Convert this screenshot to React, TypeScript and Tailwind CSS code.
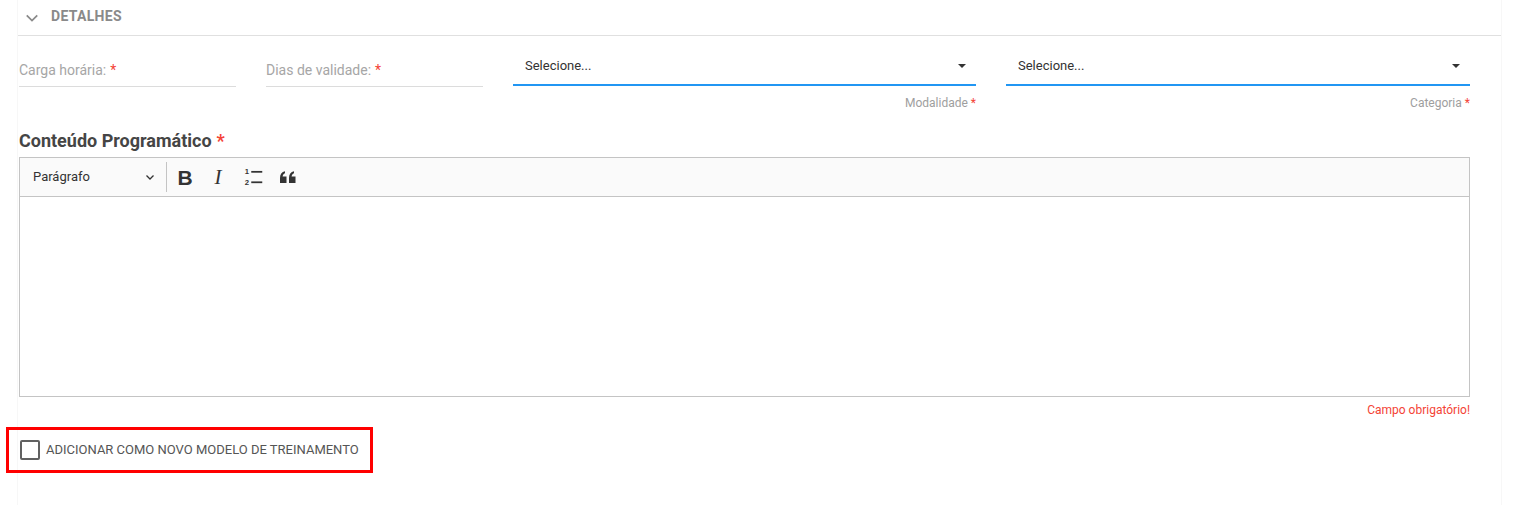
import React from 'react'

function Req() {
  return <span className="text-[#f44336] ml-1">*</span>
}

function TextField({ label }: { label: string }) {
  return (
    <div className="pt-[23px]">
      <div className="h-[28px] border-b border-[#dcdcdc] text-[14px] text-[#a6a6a6] pt-[1px]">
        {label}
        <Req />
      </div>
    </div>
  )
}

function SelectField({ label }: { label: string }) {
  return (
    <div className="pt-[18px]">
      <div className="h-[32px] border-b-2 border-[#2196f3] flex items-center justify-between pl-3 pr-[10px] pb-[6px]">
        <span className="text-[13px] text-[#333]">Selecione...</span>
        <span className="w-0 h-0 border-l-[4px] border-r-[4px] border-t-[4px] border-l-transparent border-r-transparent border-t-[#333]" />
      </div>
      <div className="text-right text-[12px] text-[#9e9e9e] mt-[8px]">
        {label}
        <span className="text-[#f44336] ml-[3px]">*</span>
      </div>
    </div>
  )
}

export default function App() {
  return (
    <div className="w-[1518px] h-[505px] bg-white font-['Roboto',sans-serif]">
      <div className="ml-[17px] w-[1485px] h-[505px] border-x border-[#f7f7f7] pr-[30px]">
        <div className="h-[36px] mr-[-30px] border-b border-[#e0e0e0] flex items-center gap-[12px] pl-[7px]">
          <svg width="14" height="14" viewBox="0 0 24 24" fill="none" stroke="#8a8a8a" strokeWidth="3">
            <path d="M3 7.5l9 9 9-9" />
          </svg>
          <span className="text-[14px] font-bold text-[#8a8a8a] tracking-[0.3px] mt-[-2px]">DETALHES</span>
        </div>

        <div className="grid grid-cols-[217px_217px_463px_464px] gap-x-[30px] pl-[1px]">
          <TextField label="Carga horária:" />
          <TextField label="Dias de validade:" />
          <SelectField label="Modalidade" />
          <SelectField label="Categoria" />
        </div>

        <div className="pl-[1px] w-[1452px]">
          <div className="mt-[16px] text-[18px] leading-[26px] font-bold text-[#454545]">
            Conteúdo Programático
            <span className="text-[#f44336] ml-[5px]">*</span>
          </div>
          <div className="mt-[3px] border border-[#c4c4c4]">
            <div className="h-[39px] bg-[#fafafa] border-b border-[#c4c4c4] flex items-center">
              <div className="w-[146px] flex items-center justify-between pl-[13px] pr-[11px]">
                <span className="text-[13px] text-[#333]">Parágrafo</span>
                <svg width="10" height="10" viewBox="0 0 10 10" fill="none" stroke="#333" strokeWidth="1.3">
                  <path d="M1.5 3.5l3.5 3.5 3.5-3.5" />
                </svg>
              </div>
              <div className="w-px h-[30px] bg-[#c4c4c4]" />
              <div className="flex items-center gap-[14px] pl-[10px]">
                <span className="text-[21px] font-bold text-[#333] leading-none font-['Liberation_Sans',sans-serif] w-[16px] text-center">B</span>
                <span className="text-[21px] italic text-[#333] leading-none font-['Liberation_Serif',serif] w-[22px] text-center">I</span>
                <svg width="22" height="22" viewBox="0 0 20 20" fill="#333">
                  <text x="1.5" y="7.5" fontSize="7" fontFamily="Liberation Sans" fontWeight="bold">1</text>
                  <text x="1.5" y="17" fontSize="7" fontFamily="Liberation Sans" fontWeight="bold">2</text>
                  <rect x="7.5" y="4.5" width="10" height="1.6" />
                  <rect x="7.5" y="14" width="10" height="1.6" />
                </svg>
                <svg width="18" height="18" viewBox="0 0 18 18" fill="#333">
                  <path d="M1 10c0-3.5 1.7-6 5-6.7v2C4.6 5.7 3.8 7 3.6 8.5H7.5V15H1V10zm9 0c0-3.5 1.7-6 5-6.7v2c-1.4.4-2.2 1.7-2.4 3.2h3.9V15H10V10z" />
                </svg>
              </div>
            </div>
            <div className="h-[199px] bg-white" />
          </div>
          <div className="text-right text-[12px] text-[#f44336] mt-[4px]">Campo obrigatório!</div>
        </div>

        <div className="ml-[-12px] mt-[8px] w-[367px] h-[46px] border-[3px] border-[#ff0000] flex items-center pl-[11px] gap-[6px]">
          <span className="w-[20px] h-[20px] border-2 border-[#616161] rounded-[2px]" />
          <span className="text-[13px] text-[#555]">ADICIONAR COMO NOVO MODELO DE TREINAMENTO</span>
        </div>
      </div>
    </div>
  )
}
